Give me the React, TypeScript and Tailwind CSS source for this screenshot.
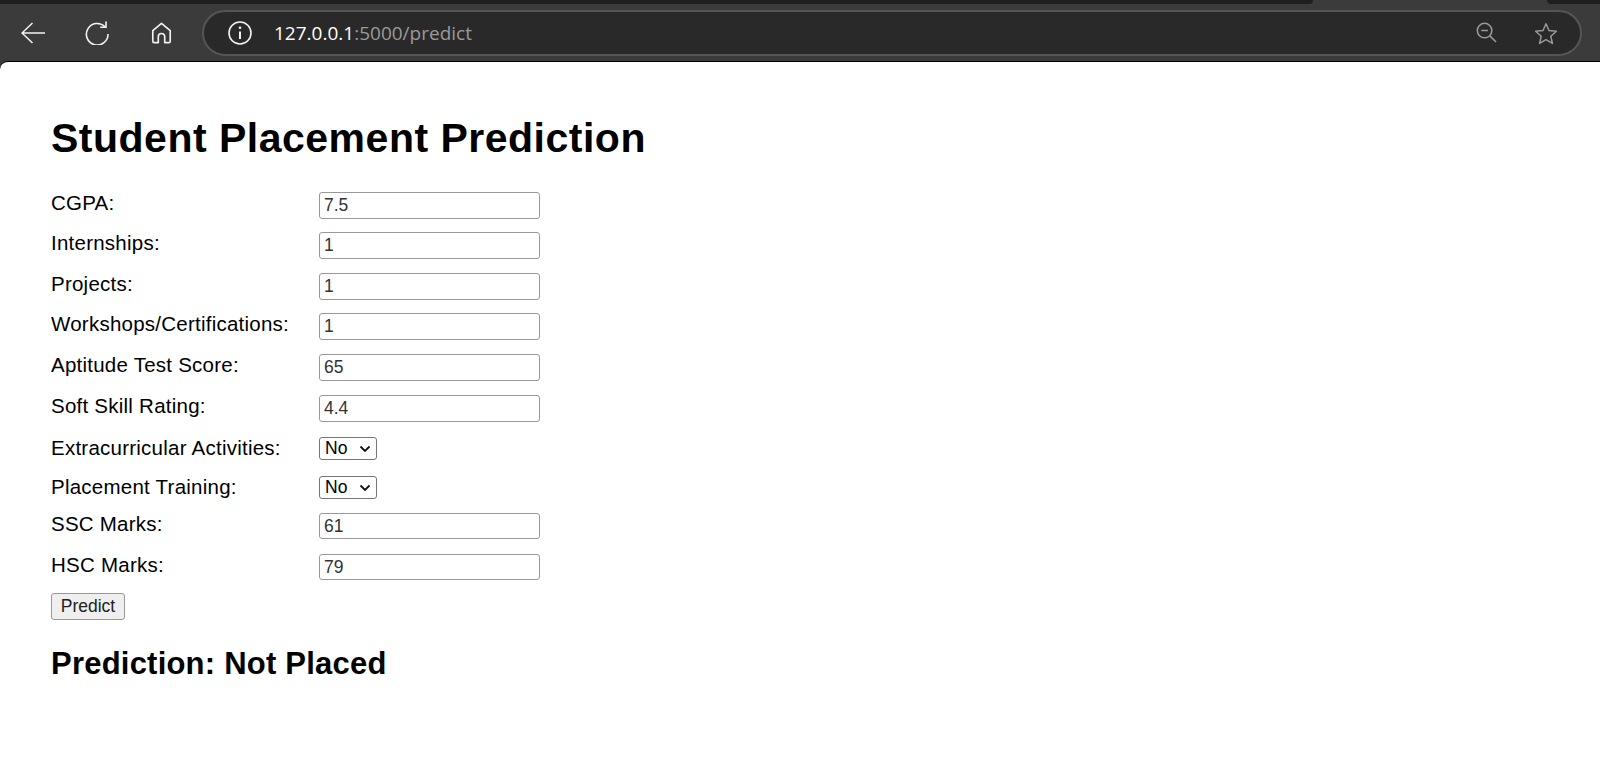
const fields = [
  { label: 'CGPA:', value: '7.5', mt: 'mt-0' },
  { label: 'Internships:', value: '1', mt: 'mt-[13px]' },
  { label: 'Projects:', value: '1', mt: 'mt-[14px]' },
  { label: 'Workshops/Certifications:', value: '1', mt: 'mt-[13px]' },
  { label: 'Aptitude Test Score:', value: '65', mt: 'mt-[14px]' },
  { label: 'Soft Skill Rating:', value: '4.4', mt: 'mt-[14px]' },
]

function Row({ label, mt, children }: { label: string; mt: string; children: React.ReactNode }) {
  return (
    <div className={`flex items-start ${mt}`}>
      <label className="w-[268px] text-[20.5px] leading-[21px] tracking-[0.24px] text-black">{label}</label>
      {children}
    </div>
  )
}

function TextField({ value, h = 'h-[27px]' }: { value: string; h?: string }) {
  return (
    <input
      readOnly
      value={value}
      className={`w-[221px] ${h} rounded-[3px] border border-[#999] bg-white px-[4px] text-[17.5px] text-[#333] outline-none`}
    />
  )
}

function NoSelect() {
  return (
    <div className="flex h-[23px] w-[58px] items-center justify-between rounded-[3px] border border-[#767676] bg-white pl-[5px] pr-[5px] text-[17.5px] leading-none text-black">
      <span>No</span>
      <svg width="12" height="8" viewBox="0 0 12 8" fill="none" stroke="#111" strokeWidth="1.8">
        <path d="M1.5 1.5 6 6l4.5-4.5" />
      </svg>
    </div>
  )
}

export default function App() {
  return (
    <div className="h-[775px] w-[1600px] overflow-hidden bg-[#3b3b3b] font-['Liberation_Sans',Arial,sans-serif]">
      {/* tab strip edge */}
      <div className="flex h-[4px]">
        <div className="w-[1313px] rounded-br-[4px] bg-[#1f1f1f]" />
        <div className="flex-1 bg-[#3b3b3b]" />
        <div className="w-[53px] rounded-bl-[4px] bg-[#1f1f1f]" />
      </div>

      {/* toolbar */}
      <div className="flex h-[57px] items-center pt-[1px]">
        <button className="ml-[21px] text-[#f2f2f2]">
          <svg className="block" width="24" height="22" viewBox="0 0 24 22" fill="none" stroke="currentColor" strokeWidth="1.5">
            <path d="M24 11H1.5M11.5 1 1 11l10.500 10" />
          </svg>
        </button>
        <button className="ml-[40px] text-[#f2f2f2]">
          <svg className="block" width="24" height="24" viewBox="0 0 24 24" fill="none" stroke="currentColor" strokeWidth="1.6">
            <path d="M20 5.800A10.800 10.800 0 1 0 23 13" />
            <path d="M21 .5v5.800h-5.800" />
          </svg>
        </button>
        <button className="ml-[42px] text-[#f2f2f2]">
          <svg className="block" width="21" height="22" viewBox="0 0 22 24" fill="none" stroke="currentColor" strokeWidth="1.800" strokeLinejoin="round">
            <path d="M11 1.500 1.500 9.500V21a1.500 1.500 0 0 0 1.500 1.500h4.500V16a3.500 3.500 0 0 1 7 0v6.500H19a1.500 1.500 0 0 0 1.500-1.500V9.500Z" />
          </svg>
        </button>

        {/* address bar */}
        <div className="ml-[30px] flex h-[46px] w-[1380px] items-center rounded-full border-2 border-[#555] bg-[#292929] pl-[24px]">
          <svg width="24" height="24" viewBox="0 0 24 24" fill="none" stroke="#f2f2f2" strokeWidth="1.600">
            <circle cx="12" cy="12" r="11" />
            <path d="M12 10.500V18" strokeWidth="2" />
            <circle cx="12" cy="6.800" r="1.300" fill="#f2f2f2" stroke="none" />
          </svg>
          <div className="ml-[22px] text-[19px] leading-none font-['Open_Sans','Noto_Sans',sans-serif]">
            <span className="text-white">127.0.0.1</span>
            <span className="text-[#9a9a9a]">:5000/predict</span>
          </div>
          <div className="ml-auto flex items-center">
            <svg className="-mt-[1px]" width="21" height="21" viewBox="0 0 22 22" fill="none" stroke="#9a9a9a" strokeWidth="1.600">
              <circle cx="9" cy="9" r="7.600" />
              <path d="M5.500 9h7M14.500 14.500l6.500 6.500" />
            </svg>
            <svg className="ml-[37px] mr-[22px]" width="24" height="23" viewBox="0 0 26 24" fill="none" stroke="#9a9a9a" strokeWidth="1.600" strokeLinejoin="round">
              <path d="M13 1.500 16.200 8.800 24.200 9.600 18.200 15 20 22.800 13 18.700 6 22.800 7.800 15 1.800 9.600 9.800 8.800Z" />
            </svg>
          </div>
        </div>
      </div>

      {/* page */}
      <div className="h-[714px] rounded-tl-[8px] border-t border-t-black bg-white pl-[51px]">
        <h1 className="pt-[53px] text-[41px] font-bold leading-[46px] tracking-[0.5px] text-black">Student Placement Prediction</h1>
        <div className="mt-[31px]">
          {fields.map(f => (
            <Row key={f.label} label={f.label} mt={f.mt}>
              <TextField value={f.value} />
            </Row>
          ))}
          <Row label="Extracurricular Activities:" mt="mt-[15px]">
            <NoSelect />
          </Row>
          <Row label="Placement Training:" mt="mt-[16px]">
            <NoSelect />
          </Row>
          <Row label="SSC Marks:" mt="mt-[14px]">
            <TextField value="61" h="h-[26px]" />
          </Row>
          <Row label="HSC Marks:" mt="mt-[15px]">
            <TextField value="79" h="h-[26px]" />
          </Row>
        </div>
        <button className="mt-[13px] block h-[27px] w-[74px] rounded-[3px] border border-[#999] bg-[#efefef] text-[17.5px] leading-none text-[#222]">
          Predict
        </button>
        <h2 className="mt-[26px] text-[31px] font-bold leading-[35px] tracking-[0.22px] text-black">Prediction: Not Placed</h2>
      </div>
    </div>
  )
}
